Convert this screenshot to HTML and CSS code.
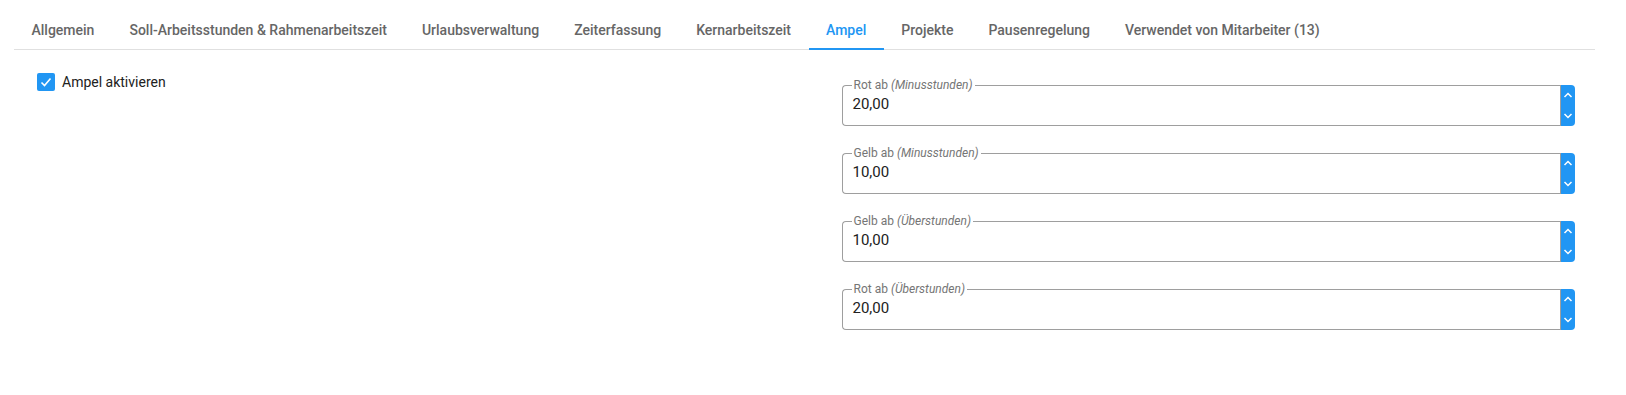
FILE: index.html
```html
<!DOCTYPE html>
<html lang="de">

<head>
    <meta charset="UTF-8">
    <title>Arbeitszeitmodell - Ampel</title>
    <link rel="stylesheet" href="styles.css">
</head>

<body>

    <div class="page">
        <nav class="tabs">
            <a class="tab">Allgemein</a>
            <a class="tab">Soll-Arbeitsstunden &amp; Rahmenarbeitszeit</a>
            <a class="tab">Urlaubsverwaltung</a>
            <a class="tab">Zeiterfassung</a>
            <a class="tab">Kernarbeitszeit</a>
            <a class="tab active">Ampel</a>
            <a class="tab">Projekte</a>
            <a class="tab">Pausenregelung</a>
            <a class="tab">Verwendet von Mitarbeiter (13)</a>
        </nav>

        <form class="content">
            <div class="col-left">
                <label class="check">
                    <span class="check-box">
                        <svg width="14" height="14" viewBox="0 0 14 14">
                            <polyline points="2.5,7.5 5.5,10.5 11.5,3.5" fill="none" stroke="#fff" stroke-width="1.6" />
                        </svg>
                    </span>
                    Ampel aktivieren
                </label>
            </div>

            <div class="col-right">
                <div class="field">
                    <fieldset>
                        <legend>Rot ab <i>(Minusstunden)</i></legend>
                        <div class="value">20,00</div>
                    </fieldset>
                    <div class="spin">
                        <svg width="14" height="41" viewBox="0 0 14 41">
                            <polyline points="3.5,12 7,8.5 10.5,12" fill="none" stroke="#fff" stroke-width="1.5" />
                            <polyline points="3.5,29 7,32.5 10.5,29" fill="none" stroke="#fff" stroke-width="1.5" />
                        </svg>
                    </div>
                </div>

                <div class="field">
                    <fieldset>
                        <legend>Gelb ab <i>(Minusstunden)</i></legend>
                        <div class="value">10,00</div>
                    </fieldset>
                    <div class="spin">
                        <svg width="14" height="41" viewBox="0 0 14 41">
                            <polyline points="3.5,12 7,8.5 10.5,12" fill="none" stroke="#fff" stroke-width="1.5" />
                            <polyline points="3.5,29 7,32.5 10.5,29" fill="none" stroke="#fff" stroke-width="1.5" />
                        </svg>
                    </div>
                </div>

                <div class="field">
                    <fieldset>
                        <legend>Gelb ab <i>(Überstunden)</i></legend>
                        <div class="value">10,00</div>
                    </fieldset>
                    <div class="spin">
                        <svg width="14" height="41" viewBox="0 0 14 41">
                            <polyline points="3.5,12 7,8.5 10.5,12" fill="none" stroke="#fff" stroke-width="1.5" />
                            <polyline points="3.5,29 7,32.5 10.5,29" fill="none" stroke="#fff" stroke-width="1.5" />
                        </svg>
                    </div>
                </div>

                <div class="field">
                    <fieldset>
                        <legend>Rot ab <i>(Überstunden)</i></legend>
                        <div class="value">20,00</div>
                    </fieldset>
                    <div class="spin">
                        <svg width="14" height="41" viewBox="0 0 14 41">
                            <polyline points="3.5,12 7,8.5 10.5,12" fill="none" stroke="#fff" stroke-width="1.5" />
                            <polyline points="3.5,29 7,32.5 10.5,29" fill="none" stroke="#fff" stroke-width="1.5" />
                        </svg>
                    </div>
                </div>
            </div>
        </form>
    </div>

</body>

</html>
```

FILE: styles.css
```css
body {
    margin: 0;
    font-family: Roboto, "Liberation Sans", sans-serif;
    background-color: #fff;
    color: #212121;
}

.page {
    padding: 11px 31px 0 14px;
}

.tabs {
    display: flex;
    border-bottom: 1px solid #e0e0e0;
}

.tab {
    padding: 9px 17.5px 8px;
    line-height: 20px;
    font-size: 14px;
    font-weight: 500;
    color: #666;
    border-bottom: 2px solid transparent;
    margin-bottom: -1px;
    white-space: nowrap;
    cursor: pointer;
}

.tab.active {
    color: #2196f3;
    border-bottom-color: #2196f3;
}

.content {
    display: grid;
    grid-template-columns: 1fr 1fr;
}

.col-left {
    padding: 23px 0 0 23px;
}

.col-right {
    padding: 28px 20px 0 37px;
}

.check {
    display: flex;
    align-items: center;
    font-size: 14px;
    line-height: 18px;
    color: #212121;
}

.check-box {
    width: 18px;
    height: 18px;
    border-radius: 2px;
    background-color: #2196f3;
    margin-right: 7px;
    display: flex;
    align-items: center;
    justify-content: center;
}

.field {
    display: flex;
    margin-bottom: 20px;
}

fieldset {
    flex: 1;
    margin: 0;
    padding: 0 10px 11px;
    border: 1px solid #9e9e9e;
    border-right: none;
    border-radius: 4px 0 0 4px;
}

legend {
    padding: 0 2px;
    margin-left: -1px;
    font-size: 12px;
    line-height: 14px;
    color: #757575;
}

.value {
    margin-top: 2px;
    font-size: 15px;
    line-height: 20px;
    color: #212121;
}

.spin {
    width: 14px;
    height: 41px;
    margin-top: 7px;
    background-color: #2196f3;
    border-left: 1px solid #9e9e9e;
    border-radius: 0 4px 4px 0;
}

.spin svg {
    display: block;
}
```
